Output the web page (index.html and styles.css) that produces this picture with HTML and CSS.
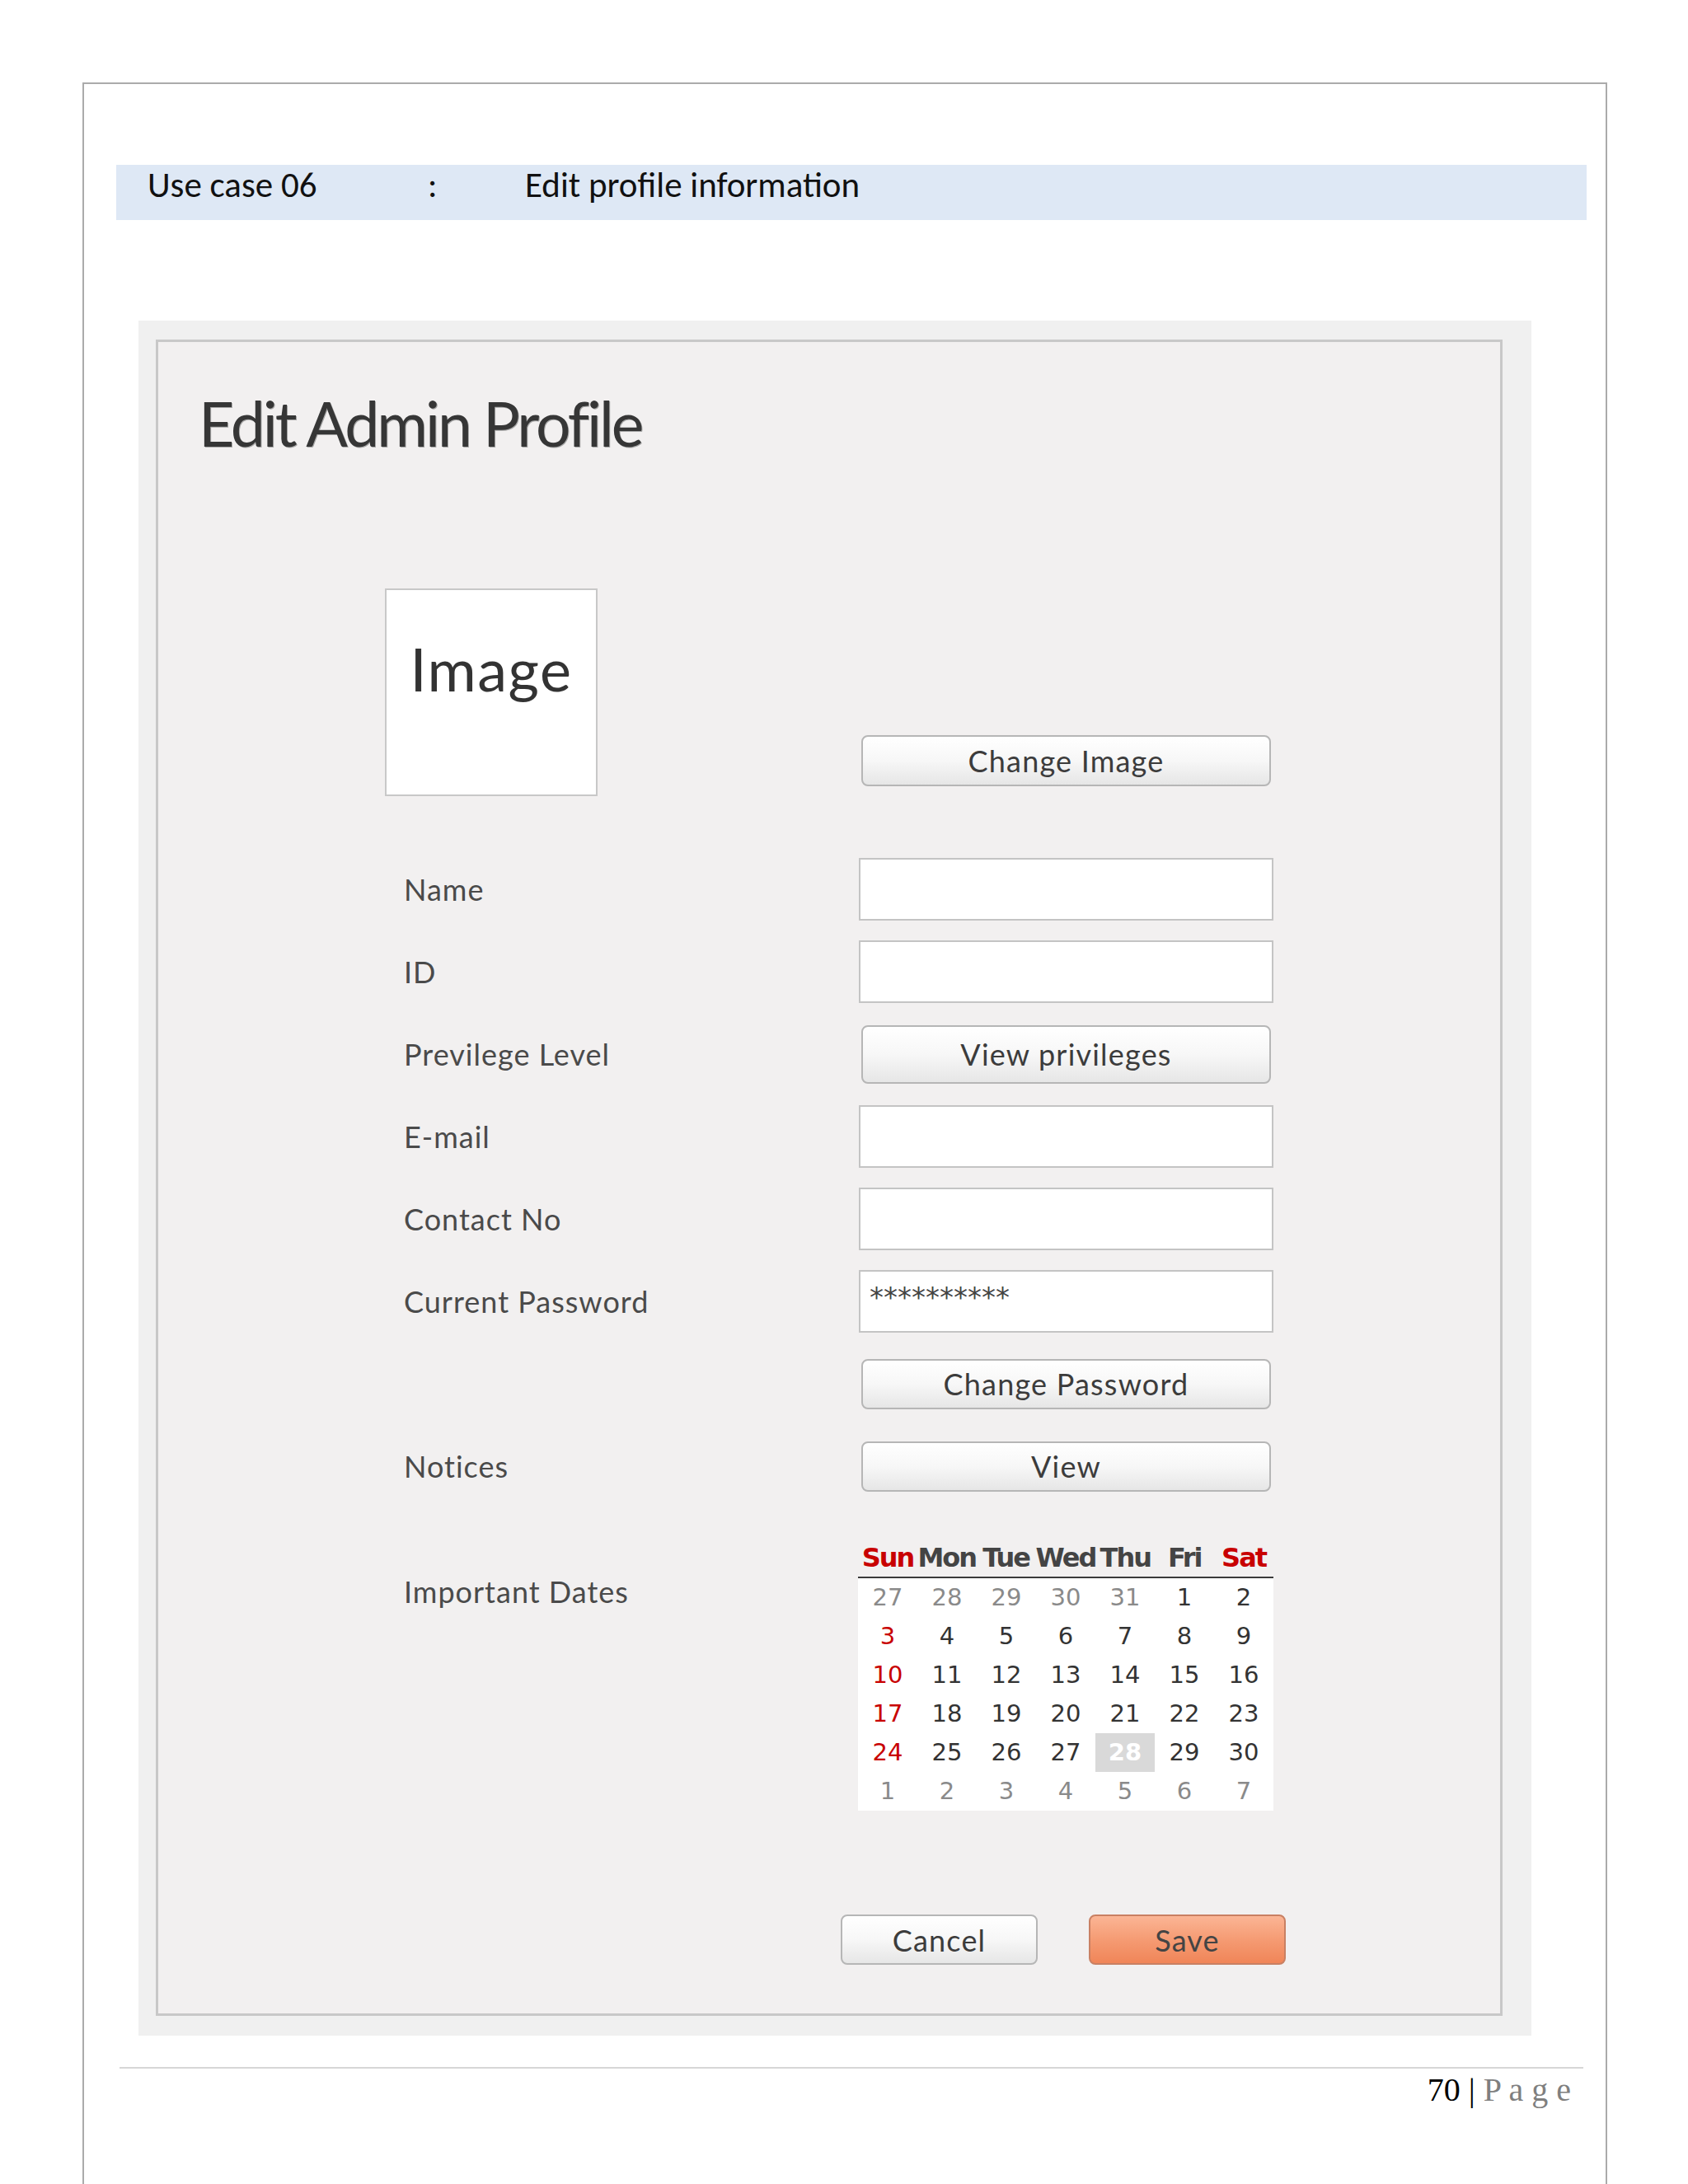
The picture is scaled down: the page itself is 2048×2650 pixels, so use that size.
FILE: index.html
```html
<!DOCTYPE html>
<html lang="en">
<head>
<meta charset="utf-8">
<title>Use case 06 - Edit profile information</title>
<link rel="stylesheet" href="styles.css">
</head>
<body>
<div class="page">
  <div class="uc-bar">
    <span class="uc-key">Use case 06</span>
    <span class="uc-colon">:</span>
    <span class="uc-val">Edit profile information</span>
  </div>

  <div class="shot">
    <div class="panel">
      <h1 class="title">Edit Admin Profile</h1>

      <div class="form">
        <div class="row-top">
          <div class="image-box">Image</div>
          <button class="btn btn-wide btn-change-image">Change Image</button>
        </div>

        <div class="rows">
          <div class="row"><span class="lbl">Name</span><div class="input"></div></div>
          <div class="row"><span class="lbl">ID</span><div class="input"></div></div>
          <div class="row"><span class="lbl">Previlege Level</span><button class="btn btn-wide btn-tall">View privileges</button></div>
          <div class="row"><span class="lbl">E-mail</span><div class="input"></div></div>
          <div class="row"><span class="lbl">Contact No</span><div class="input"></div></div>
          <div class="row"><span class="lbl">Current Password</span><div class="input"><span class="stars">**********</span></div></div>
          <div class="row"><span class="lbl"></span><button class="btn btn-wide">Change Password</button></div>
          <div class="row"><span class="lbl">Notices</span><button class="btn btn-wide">View</button></div>
        </div>

        <div class="row-cal">
          <span class="lbl lbl-cal">Important Dates</span>
          <div class="cal">
            <div class="cal-head">
              <span class="red">Sun</span><span>Mon</span><span>Tue</span><span>Wed</span><span>Thu</span><span>Fri</span><span class="red">Sat</span>
            </div>
            <div class="cal-body">
              <span class="other">27</span><span class="other">28</span><span class="other">29</span><span class="other">30</span><span class="other">31</span><span>1</span><span>2</span>
              <span class="red">3</span><span>4</span><span>5</span><span>6</span><span>7</span><span>8</span><span>9</span>
              <span class="red">10</span><span>11</span><span>12</span><span>13</span><span>14</span><span>15</span><span>16</span>
              <span class="red">17</span><span>18</span><span>19</span><span>20</span><span>21</span><span>22</span><span>23</span>
              <span class="red">24</span><span>25</span><span>26</span><span>27</span><span class="today">28</span><span>29</span><span>30</span>
              <span class="other">1</span><span class="other">2</span><span class="other">3</span><span class="other">4</span><span class="other">5</span><span class="other">6</span><span class="other">7</span>
            </div>
          </div>
        </div>

        <div class="actions">
          <button class="btn btn-action">Cancel</button>
          <button class="btn btn-action btn-save">Save</button>
        </div>
      </div>
    </div>
  </div>

  <div class="footer"><span class="pg-num">70 |</span> <span class="pg-word">P a g e</span></div>
</div>
</body>
</html>
```

FILE: styles.css
```css
html, body {
  margin: 0;
  padding: 0;
  background: #ffffff;
}

body {
  font-family: Lato, "Open Sans", sans-serif;
  color: #333333;
}

.page {
  margin: 100px 0 0 100px;
  width: 1850px;
  height: 2550px;
  box-sizing: border-box;
  border: 2px solid #ababab;
  border-bottom: none;
}

/* Use case header bar */
.uc-bar {
  margin: 98px 0 0 39px;
  width: 1784px;
  height: 67px;
  box-sizing: border-box;
  padding: 3px 0 0 38px;
  background: #dee8f5;
  display: flex;
  font-family: Carlito, Lato, sans-serif;
  font-size: 43px;
  line-height: 44px;
  color: #111111;
}

.uc-key { width: 340px; }
.uc-colon { width: 118px; }

/* Screenshot frame */
.shot {
  margin: 122px 0 0 66px;
  width: 1690px;
  height: 2081px;
  box-sizing: border-box;
  padding: 23px 0 0 21px;
  background: #f0f0f0;
}

.panel {
  width: 1634px;
  height: 2034px;
  box-sizing: border-box;
  border: 3px solid #c8c8c8;
  background: #f2f0f0;
  overflow: hidden;
}

.title {
  margin: 53px 0 0 49px;
  font-family: Lato, sans-serif;
  font-weight: 400;
  font-size: 75px;
  line-height: 90px;
  letter-spacing: -3px;
  color: #363636;
  text-shadow: 1px 1px 0 #a8a8a8;
}

.form {
  margin: 156px 0 0 275px;
}

.row-top,
.row,
.row-cal {
  display: grid;
  grid-template-columns: 575px 503px;
}

.row-top {
  height: 252px;
}

.image-box {
  width: 258px;
  height: 252px;
  box-sizing: border-box;
  border: 2px solid #c8c8c8;
  background: #ffffff;
  text-align: center;
  padding-top: 52px;
  font-size: 72px;
  line-height: 86px;
  letter-spacing: 1.5px;
  color: #333333;
}

.btn-change-image {
  align-self: end;
  margin-bottom: 12px;
}

.rows {
  margin-top: 63px;
}

.row {
  height: 100px;
  align-items: center;
}

.lbl {
  padding-left: 23px;
  font-size: 36px;
  line-height: 43px;
  letter-spacing: 1px;
  color: #4a4a4a;
}

.input {
  width: 503px;
  height: 76px;
  box-sizing: border-box;
  border: 2px solid #c4c4c4;
  background: #ffffff;
  padding: 11px 0 0 11px;
}

.stars {
  display: block;
  font-family: "DejaVu Sans", sans-serif;
  font-size: 34px;
  line-height: 40px;
  color: #444444;
}

/* Buttons */
.btn {
  box-sizing: border-box;
  height: 61px;
  padding: 0;
  border: 2px solid #b6b6b6;
  border-radius: 8px;
  background: linear-gradient(#ffffff 0%, #f7f7f7 50%, #e6e6e6 100%);
  font-family: Lato, sans-serif;
  font-size: 36px;
  line-height: 1;
  letter-spacing: 1.2px;
  color: #3c3c3c;
  text-align: center;
}

.btn-wide {
  width: 497px;
  justify-self: center;
}

.btn-change-image {
  height: 62px;
}

.btn-tall {
  height: 71px;
}

/* Calendar */
.row-cal {
  margin-top: 41px;
  align-items: start;
}

.lbl-cal {
  margin-top: 40px;
}

.cal {
  width: 504px;
  margin-left: -1px;
}

.cal-head,
.cal-body {
  display: grid;
  grid-template-columns: repeat(7, 1fr);
  text-align: center;
  font-family: "DejaVu Sans", sans-serif;
}

.cal-head {
  height: 40px;
  padding-bottom: 3px;
  border-bottom: 2px solid #3a3a3a;
  font-size: 32px;
  font-weight: 700;
  line-height: 40px;
  letter-spacing: -2px;
  color: #444444;
  white-space: nowrap;
}

.cal-body {
  background: #ffffff;
  font-size: 29px;
  line-height: 47px;
  color: #333333;
}

.cal-body span {
  height: 47px;
}

.cal .red { color: #c80000; }
.cal .other { color: #8a8a8a; }

.cal .today {
  background: #d9d9d9;
  color: #ffffff;
  font-weight: 700;
}

/* Actions */
.actions {
  margin-top: 126px;
  padding-left: 553px;
  display: flex;
  gap: 62px;
}

.btn-action {
  width: 239px;
}

.btn-save {
  border-color: #c98063;
  background: linear-gradient(#fbb595 0%, #f59b73 50%, #f08558 100%);
  color: #444444;
}

/* Page footer */
.footer {
  margin: 38px 0 0 43px;
  width: 1776px;
  box-sizing: border-box;
  border-top: 2px solid #d6d6d6;
  padding: 2px 15px 0 0;
  text-align: right;
  font-family: "Liberation Serif", "Times New Roman", serif;
  font-size: 40px;
  line-height: 48px;
}

.pg-num { color: #000000; }
.pg-word { color: #7f7f7f; }
```
